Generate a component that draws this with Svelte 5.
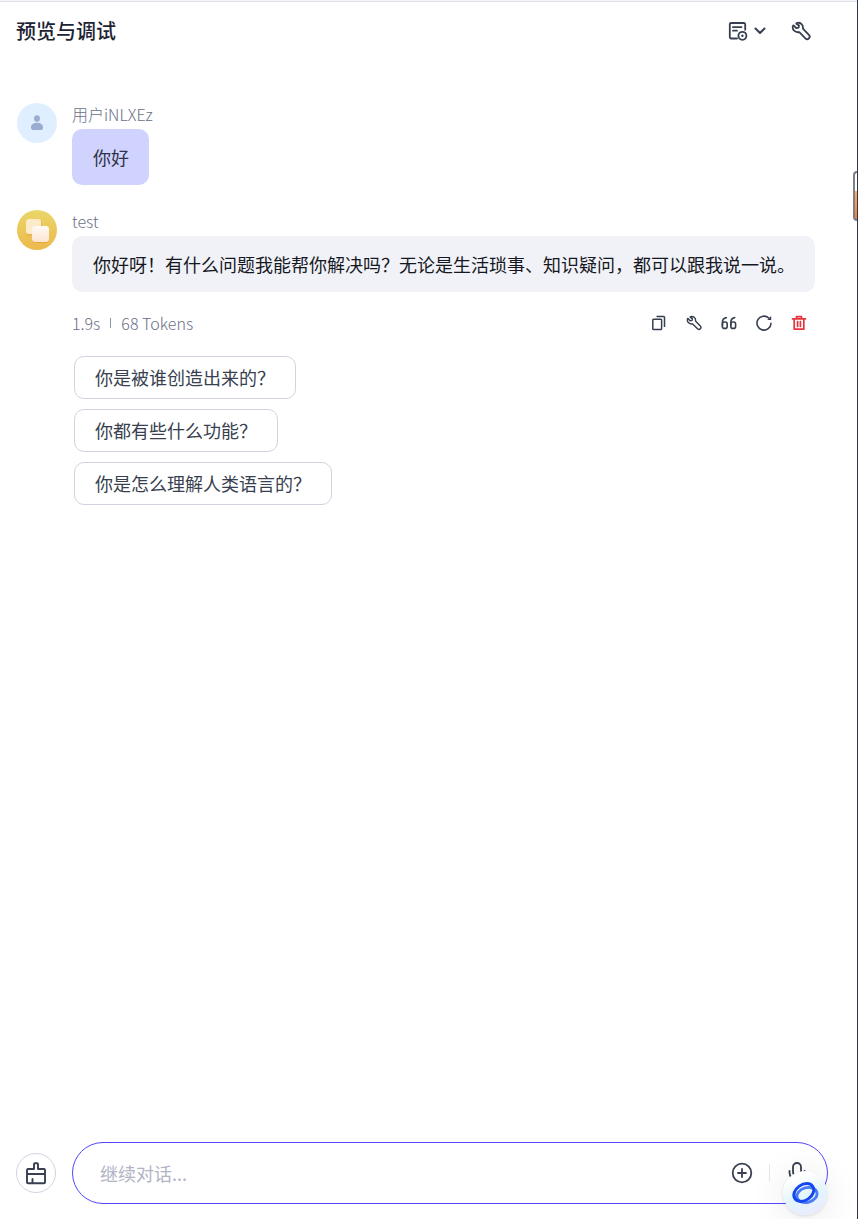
<script lang="ts">
  let draft = $state("");

  const suggestions = [
    "你是被谁创造出来的？",
    "你都有些什么功能？",
    "你是怎么理解人类语言的？",
  ];
</script>

{#snippet wrench(size: number)}
  <svg width={size} height={size} viewBox="0 0 20 20" fill="none" stroke="currentColor" stroke-width="1.8" stroke-linejoin="round" stroke-linecap="round" aria-hidden="true">
    <path d="M5.6 2.1C8.8 0.9 12.6 3.4 11.9 7.6L17.9 13.8A2.3 2.3 0 0 1 14.4 17.3L8.3 11.1C4.4 12 0.7 8.6 2 4.8C2.1 4.4 2.6 4.4 2.9 4.7L5.2 7.1L7.6 6.7L8 4.6L5.5 2.9C5.2 2.6 5.2 2.3 5.6 2.1Z" />
  </svg>
{/snippet}

<div class="panel">
  <header class="topbar">
    <h1>预览与调试</h1>
    <div class="tools">
      <button class="icon-btn memory" aria-label="记忆">
        <svg width="20" height="20" viewBox="0 0 20 20" fill="none" stroke="currentColor" stroke-width="1.8" stroke-linecap="round" aria-hidden="true">
          <path d="M9 17.5H3A1.2 1.2 0 0 1 1.8 16.3V3.2A1.2 1.2 0 0 1 3 2H16A1.2 1.2 0 0 1 17.2 3.2V8.8M5 6.2H13.5M5 9.7H9" />
          <circle cx="14.4" cy="14.8" r="4" />
          <circle cx="14.4" cy="14.8" r="1.2" fill="currentColor" stroke="none" />
        </svg>
        <svg width="12" height="8" viewBox="0 0 12 8" fill="none" stroke="currentColor" stroke-width="2" stroke-linecap="round" stroke-linejoin="round" aria-hidden="true">
          <path d="M1.5 1.5L6 6L10.5 1.5" />
        </svg>
      </button>
      <button class="icon-btn" aria-label="调试">{@render wrench(20)}</button>
    </div>
  </header>

  <main class="chat">
    <article class="message">
      <div class="avatar user">
        <svg width="14" height="16" viewBox="0 0 14 16" fill="#9aaccf" aria-hidden="true">
          <ellipse cx="7" cy="3.5" rx="2.9" ry="3.2" />
          <path d="M1 12.2C1 9.4 3.6 7.8 7 7.8S13 9.4 13 12.2C13 14.2 12.2 15 10.5 15H3.5C1.8 15 1 14.2 1 12.2Z" />
        </svg>
      </div>
      <div class="content">
        <div class="name">用户iNLXEz</div>
        <div class="bubble mine">你好</div>
      </div>
    </article>

    <article class="message">
      <div class="avatar bot">
        <svg width="40" height="40" viewBox="0 0 40 40" aria-hidden="true">
          <defs>
            <linearGradient id="tile" x1="0" y1="0" x2="0" y2="1">
              <stop offset="0" stop-color="#fffaf5" />
              <stop offset="1" stop-color="#fde5cf" />
            </linearGradient>
          </defs>
          <rect x="9" y="10" width="16" height="16" rx="3" fill="#e89b3c" opacity="0.35" />
          <rect x="9" y="9" width="15" height="15" rx="3" fill="#fbebc8" />
          <rect x="15" y="17" width="17" height="16" rx="3" fill="#e58b2c" opacity="0.45" />
          <rect x="15" y="16" width="17" height="16" rx="3" fill="url(#tile)" />
        </svg>
      </div>
      <div class="content">
        <div class="name">test</div>
        <div class="bubble">你好呀！有什么问题我能帮你解决吗？无论是生活琐事、知识疑问，都可以跟我说一说。</div>
        <div class="meta">
          <span>1.9s</span>
          <i class="divider"></i>
          <span>68 Tokens</span>
          <div class="actions">
            <button class="icon-btn" aria-label="复制">
              <svg width="16" height="16" viewBox="0 0 16 16" fill="none" stroke="currentColor" stroke-width="1.5" stroke-linejoin="round" aria-hidden="true">
                <rect x="1.8" y="4.2" width="8.8" height="10.4" rx="0.8" />
                <path d="M5.5 1.5H12.5A1 1 0 0 1 13.5 2.5V12" />
              </svg>
            </button>
            <button class="icon-btn" aria-label="调试">{@render wrench(16)}</button>
            <button class="icon-btn" aria-label="引用">
              <svg width="16" height="16" viewBox="0 0 16 16" fill="none" stroke="currentColor" stroke-width="1.6" stroke-linecap="round" aria-hidden="true">
                <path d="M5.3 2.6C2.7 3 1.4 4.6 1.4 7.6V10.8" />
                <rect x="1.4" y="7" width="4.8" height="6.4" rx="2" />
                <path d="M13.7 2.6C11.1 3 9.8 4.6 9.8 7.6V10.8" />
                <rect x="9.8" y="7" width="4.8" height="6.4" rx="2" />
              </svg>
            </button>
            <button class="icon-btn" aria-label="重新生成">
              <svg width="16" height="16" viewBox="0 0 16 16" fill="none" stroke="currentColor" stroke-width="1.6" stroke-linecap="round" aria-hidden="true">
                <path d="M15 8.2A7 7 0 1 1 12.8 3" />
                <path d="M15.2 0.9V5H11.2Z" fill="currentColor" stroke="none" />
              </svg>
            </button>
            <button class="icon-btn danger" aria-label="删除">
              <svg width="16" height="16" viewBox="0 0 16 16" fill="none" stroke="currentColor" stroke-width="1.7" aria-hidden="true">
                <path d="M1.5 3.8H14.5M5.5 3.5V1.7H10.5V3.5M3.2 4V14.2H12.8V4M6.6 6.5V11.5M9.4 6.5V11.5" stroke-linecap="round" stroke-linejoin="round" />
              </svg>
            </button>
          </div>
        </div>
        <div class="suggestions">
          {#each suggestions as text}
            <button class="suggestion" onclick={() => (draft = text)}>{text}</button>
          {/each}
        </div>
      </div>
    </article>
  </main>

  <footer class="composer">
    <button class="clear" aria-label="清除上下文">
      <svg width="22" height="24" viewBox="0 0 22 24" fill="none" stroke="currentColor" stroke-width="1.9" stroke-linejoin="round" stroke-linecap="round" aria-hidden="true">
        <path d="M9 8V3.2A1 1 0 0 1 10 2.2H12A1 1 0 0 1 13 3.2V8H19A1 1 0 0 1 20 9V21.2A1 1 0 0 1 19 22.2H3A1 1 0 0 1 2 21.2V9A1 1 0 0 1 3 8ZM2 13H20M7.5 18V22" />
      </svg>
    </button>
    <div class="field">
      <input type="text" placeholder="继续对话..." aria-label="继续对话" bind:value={draft} />
      <button class="icon-btn" aria-label="添加">
        <svg width="22" height="22" viewBox="0 0 22 22" fill="none" stroke="currentColor" stroke-width="1.8" stroke-linecap="round" aria-hidden="true">
          <circle cx="11" cy="11" r="9.3" />
          <path d="M11 7V15M7 11H15" />
        </svg>
      </button>
      <i class="rule"></i>
      <button class="icon-btn" aria-label="语音">
        <svg width="22" height="22" viewBox="0 0 22 22" fill="none" stroke="currentColor" stroke-width="1.8" stroke-linecap="round" aria-hidden="true">
          <rect x="7" y="1" width="8" height="13" rx="4" />
          <path d="M3.5 9V10.5A7.5 7.5 0 0 0 18.5 10.5V9M11 18V21" />
        </svg>
      </button>
    </div>
  </footer>

  <button class="assistant" aria-label="助手">
    <svg width="28" height="26" viewBox="0 0 28 26" fill="none" aria-hidden="true">
      <ellipse cx="16" cy="15" rx="10.2" ry="7.4" stroke="#4a7cf5" stroke-width="2.8" transform="rotate(-15 16 15)" />
      <ellipse cx="12.8" cy="12.5" rx="10.8" ry="7.8" stroke="#1447ee" stroke-width="3" transform="rotate(-35 12.8 12.5)" />
    </svg>
  </button>
  <div class="side-tab"></div>
</div>

<style>
  :global(body) {
    background: #fff;
  }

  .panel {
    position: relative;
    box-sizing: border-box;
    min-height: 100vh;
    display: flex;
    flex-direction: column;
    border-right: 1px solid #2b3648;
    overflow: hidden;
    color: #383f50;
    font-family: "Noto Sans CJK SC", sans-serif;
    font-size: 18px;
  }

  button {
    font: inherit;
    color: inherit;
    padding: 0;
    background: none;
    border: 0;
    cursor: pointer;
  }

  svg {
    display: block;
    flex: none;
  }

  .icon-btn {
    display: flex;
    align-items: center;
  }

  .topbar {
    display: flex;
    align-items: center;
    justify-content: space-between;
    height: 60px;
    padding: 0 46px 0 16px;
    border-top: 1px solid #f5f5f9;
    box-shadow: inset 0 1px #e0e1ec;
  }

  h1 {
    margin: 0;
    font-size: 20px;
    line-height: 28px;
    font-weight: 500;
    color: #1d2333;
  }

  .tools {
    display: flex;
    gap: 25px;
  }

  .memory {
    gap: 6px;
  }

  .chat {
    flex: 1;
    display: flex;
    flex-direction: column;
    gap: 25px;
    padding: 42px 42px 24px 17px;
  }

  .message {
    display: flex;
    gap: 15px;
  }

  .avatar {
    flex: none;
    display: flex;
    align-items: center;
    justify-content: center;
    width: 40px;
    height: 40px;
    border-radius: 50%;
  }

  .user {
    background: #dfefff;
  }

  .bot {
    background: linear-gradient(#ead668, #ecb94e);
  }

  .content {
    flex: 1;
    min-width: 0;
  }

  .name {
    margin-bottom: 4px;
    font-size: 16px;
    line-height: 22px;
    font-weight: 300;
    color: #697087;
  }

  .bubble {
    width: fit-content;
    padding: 14px 20px 14px 21px;
    line-height: 28px;
    border-radius: 10px;
    background: #f1f2f8;
    color: #16181f;
  }

  .mine {
    background: #d1d3ff;
    color: #2f3448;
  }

  .meta {
    display: flex;
    align-items: center;
    gap: 10px;
    margin-top: 19px;
    font-size: 16px;
    line-height: 24px;
    font-weight: 300;
    color: #697087;
  }

  .divider {
    width: 1px;
    height: 10px;
    background: #8e94a6;
  }

  .actions {
    display: flex;
    gap: 19px;
    margin-left: auto;
    padding-right: 8px;
    color: #383f50;
  }

  .danger {
    color: #e5343f;
  }

  .suggestions {
    display: flex;
    flex-direction: column;
    align-items: flex-start;
    gap: 10px;
    margin: 21px 0 0 2px;
  }

  .suggestion {
    padding: 7px 20px;
    border: 1px solid #d1d3e2;
    border-radius: 10px;
    line-height: 27px;
    text-align: left;
  }

  .composer {
    display: flex;
    align-items: center;
    gap: 16px;
    padding: 0 29px 15px 16px;
  }

  .clear {
    flex: none;
    display: flex;
    align-items: center;
    justify-content: center;
    width: 40px;
    height: 40px;
    border: 1px solid #d1d3e2;
    border-radius: 50%;
  }

  .field {
    flex: 1;
    min-width: 0;
    display: flex;
    align-items: center;
    gap: 16px;
    box-sizing: border-box;
    height: 62px;
    padding: 0 19px 0 27px;
    border: 1px solid #5147ff;
    border-radius: 31px;
  }

  input {
    flex: 1;
    min-width: 0;
    padding: 0;
    border: 0;
    outline: 0;
    background: none;
    font: inherit;
    line-height: 28px;
    color: inherit;
  }

  input::placeholder {
    color: #b0b4c5;
    opacity: 1;
  }

  .rule {
    width: 1px;
    height: 18px;
    background: #e6e7ee;
  }

  .assistant {
    position: absolute;
    right: 30px;
    bottom: 4px;
    display: flex;
    align-items: center;
    justify-content: center;
    width: 44px;
    height: 44px;
    border-radius: 50%;
    background: linear-gradient(160deg, #fff 20%, #e2f5fd 55%, #ece8ff);
    box-shadow: 0 1px 3px rgba(0, 0, 0, 0.12), 0 4px 36px rgba(0, 0, 0, 0.1);
  }

  .side-tab {
    position: absolute;
    top: 171px;
    right: 0;
    box-sizing: border-box;
    width: 4px;
    height: 50px;
    border: 2px solid #808080;
    border-right: 0;
    border-radius: 4px 0 0 4px;
    background: linear-gradient(#fff 40%, #ffad67 40%, #f58236);
  }
</style>
